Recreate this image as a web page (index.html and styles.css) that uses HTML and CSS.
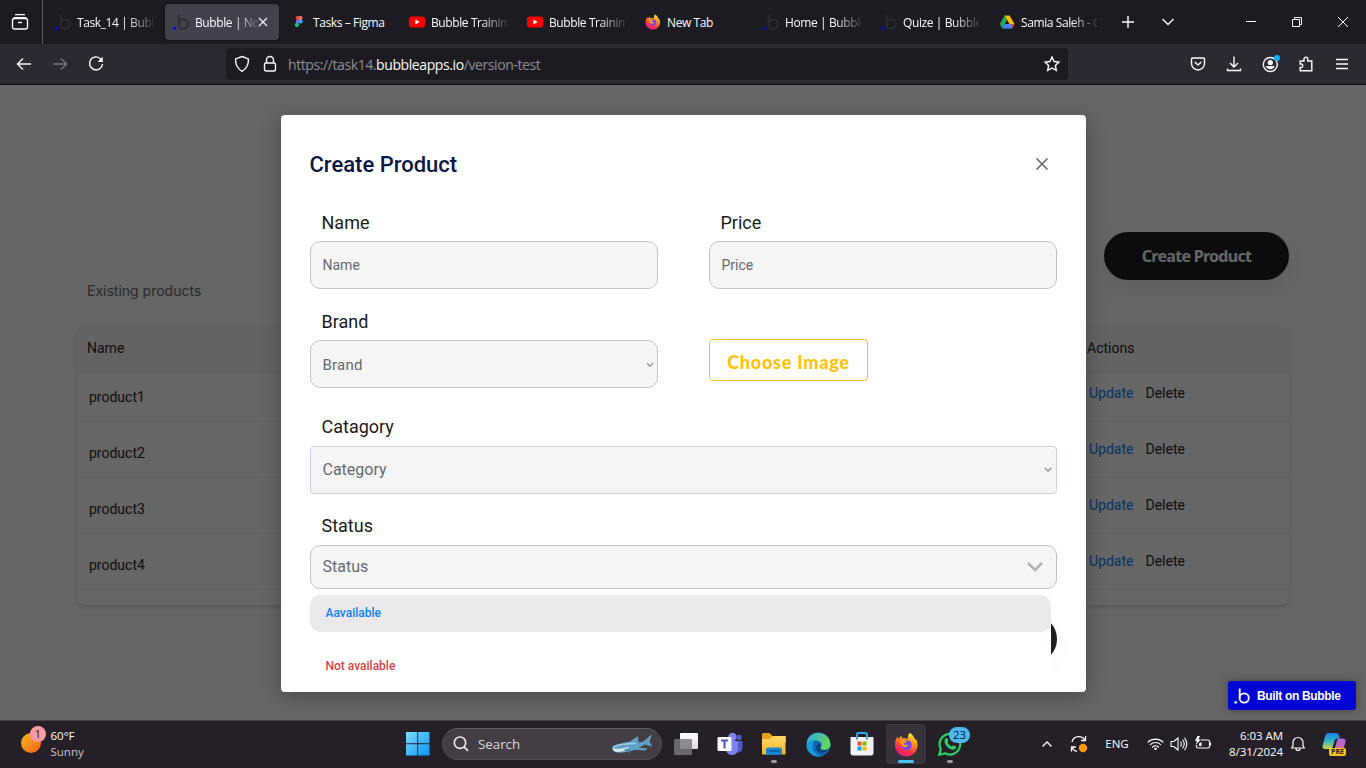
FILE: index.html
```
<!DOCTYPE html>
<html lang="en">
<head>
<meta charset="utf-8">
<title>Bubble | No-code apps</title>
<link rel="stylesheet" href="styles.css">
</head>
<body>
<svg class="defs" width="0" height="0">
  <defs>
    <linearGradient id="fx" x1="0.8" y1="0" x2="0.3" y2="1"><stop offset="0" stop-color="#fff44f"/><stop offset=".35" stop-color="#ff980e"/><stop offset=".7" stop-color="#ff3647"/><stop offset="1" stop-color="#e31587"/></linearGradient>
    <linearGradient id="win" x1="0" y1="0" x2="1" y2="1"><stop offset="0" stop-color="#7fdcff"/><stop offset="1" stop-color="#0a93f5"/></linearGradient>
    <linearGradient id="sun" x1="0" y1="0" x2="1" y2="1"><stop offset="0" stop-color="#f5b52a"/><stop offset="1" stop-color="#f2640c"/></linearGradient>
    <linearGradient id="edge" x1="0" y1="0" x2="1" y2=".3"><stop offset="0" stop-color="#2aa8e8"/><stop offset="1" stop-color="#62d75a"/></linearGradient>
    <linearGradient id="folder" x1="0" y1="0" x2="0" y2="1"><stop offset="0" stop-color="#ffd968"/><stop offset="1" stop-color="#f7b52c"/></linearGradient>
    <linearGradient id="pane" x1="0" y1="0" x2="0" y2="1"><stop offset="0" stop-color="#fff"/><stop offset="1" stop-color="#d8d8d8"/></linearGradient>
    <linearGradient id="cop1" x1="0" y1="0" x2="0" y2="1"><stop offset="0" stop-color="#1b7fe8"/><stop offset=".5" stop-color="#2fb6c8"/><stop offset="1" stop-color="#d8d545"/></linearGradient>
    <linearGradient id="cop2" x1="0" y1="0" x2="0" y2="1"><stop offset="0" stop-color="#a568e8"/><stop offset="1" stop-color="#f0688f"/></linearGradient>
    <symbol id="bubble" viewBox="0 0 16 16"><path d="M5.700 .5V10" fill="none" stroke="currentColor" stroke-width="1.800"/><circle cx="10.200" cy="10" r="4.600" fill="none" stroke="currentColor" stroke-width="1.800"/><circle cx="1.700" cy="14.300" r="1.500" class="bubble-dot"/></symbol>
    <symbol id="firefox" viewBox="0 0 24 24"><path d="M15.2.8c3 2 4.200 4.200 4.700 5.700 1 .3 1.900 1.500 2.300 3.200C24.200 17 18.700 23.500 12 23.500 5.500 23.500.8 18.300.8 12.400c0-3.300 1.200-6.200 2.700-8 .1 1 .3 1.700.7 2.300C5.300 5 6.500 4 7.500 3.600c-.1 1 .1 2 .6 2.600 2.300-.4 4.100-.1 5 .9C13 5 13.500 2.200 15.200.8z" fill="url(#fx)"/><circle cx="12.300" cy="12.600" r="4.800" fill="#7548e8"/><path d="M4.500 9.200C7 7.500 9 8.500 12.600 8.700c-.5 1.600-2.800 1.500-3 2.700.5 1.200 2.300 1 4.200.8-1.300 2.800-5.300 3-6.800.5-.5-1-.9-2.500-2.500-3.500z" fill="#ff9a18"/></symbol>
    <symbol id="youtube" viewBox="0 0 16 16"><rect y="2.500" width="16" height="11" rx="2.800" fill="#f00"/><path d="M6.400 5.600v4.800L10.600 8z" fill="#fff"/></symbol>
  </defs>
</svg>

<div class="window">
  <header class="tabs">
    <div class="firefox-view"><svg width="18" height="18" viewBox="0 0 18 18" class="line"><path d="M4 1.600h10M2.500 4.600h13"/><rect x="1.500" y="5.500" width="15" height="10.500" rx="2"/><path d="M7 9.500h4"/></svg></div>
    <div class="tab"><svg class="fav dark"><use href="#bubble"/></svg><span class="tab-title">Task_14 | Bubble</span></div>
    <div class="tab active"><svg class="fav dark"><use href="#bubble"/></svg><span class="tab-title">Bubble | No-code</span><svg class="tab-close line" width="10" height="10" viewBox="0 0 10 10"><path d="M1 1l8 8M9 1L1 9"/></svg></div>
    <div class="tab"><svg class="fav" viewBox="0 0 16 16"><path d="M7.800 2H6.700a2.100 2.100 0 0 0 0 4.200h1.100z" fill="#f24e1e"/><path d="M7.800 2h1.700a2.100 2.100 0 0 1 0 4.200H7.800z" fill="#ff7262"/><path d="M7.800 5.500H6.700a2 2 0 0 0 0 4h1.100z" fill="#a259ff"/><circle cx="9.600" cy="7.500" r="2" fill="#1abcfe"/><path d="M7.800 9.200H6.700a2 2 0 1 0 1.100 1.800z" fill="#0acf83"/></svg><span class="tab-title short">Tasks – Figma</span></div>
    <div class="tab"><svg class="fav"><use href="#youtube"/></svg><span class="tab-title">Bubble Training</span></div>
    <div class="tab"><svg class="fav"><use href="#youtube"/></svg><span class="tab-title">Bubble Training</span></div>
    <div class="tab"><svg class="fav"><use href="#firefox"/></svg><span class="tab-title short">New Tab</span></div>
    <div class="tab"><svg class="fav dark"><use href="#bubble"/></svg><span class="tab-title">Home | Bubble</span></div>
    <div class="tab"><svg class="fav dark"><use href="#bubble"/></svg><span class="tab-title">Quize | Bubble</span></div>
    <div class="tab"><svg class="fav" viewBox="0 0 16 16"><path d="M5.500 1.500L.8 10l2.400 4.500L8 6z" fill="#2aa850"/><path d="M5.500 1.500h5L15.500 10h-5z" fill="#fbbc04"/><path d="M5.600 10H15.500L13 14.500H3.200z" fill="#4285f4"/><path d="M11.500 10h4L13 14.500z" fill="#ea4335"/></svg><span class="tab-title">Samia Saleh - Google</span></div>
    <svg class="line new-tab" width="12" height="12" viewBox="0 0 12 12"><path d="M6 0v12M0 6h12"/></svg>
    <svg class="line list-tabs" width="12" height="8" viewBox="0 0 12 8"><path d="M.5 1L6 6.500 11.500 1"/></svg>
    <div class="win-buttons">
      <svg class="line thin" width="10" height="10" viewBox="0 0 10 10"><path d="M0 4.500h10"/></svg>
      <svg class="line thin" width="10" height="10" viewBox="0 0 10 10"><path d="M.5 2.500h7v7h-7zM2.500 2.500v-2h7v7h-2"/></svg>
      <svg class="line thin" width="10" height="10" viewBox="0 0 10 10"><path d="M0 0l10 10M10 0L0 10"/></svg>
    </div>
  </header>

  <nav class="toolbar">
    <div class="nav-buttons">
      <svg class="line" width="16" height="16" viewBox="0 0 16 16"><path d="M15 8H1.500M7 2.500L1.500 8 7 13.500"/></svg>
      <svg class="line off" width="16" height="16" viewBox="0 0 16 16"><path d="M1 8h13.500M9 2.500L14.500 8 9 13.500"/></svg>
      <svg class="line" width="16" height="16" viewBox="0 0 16 16"><path d="M13 3.200A6.500 6.500 0 1 0 14.500 8"/><path d="M14.800.8v5.200H9.600z" fill="#fbfbfe" stroke="none"/></svg>
    </div>
    <div class="urlbar">
      <svg class="line" width="16" height="18" viewBox="0 0 16 18"><path d="M8 1.500l6.400 2.400c.3 5-1.400 9.500-6.400 12.400C3 13.400 1.300 8.900 1.600 3.900z"/></svg>
      <svg class="line" width="14" height="18" viewBox="0 0 14 18"><rect x="1.500" y="8" width="11" height="8" rx="1.500"/><path d="M3.500 8V5a3.500 3.500 0 0 1 7 0v3"/></svg>
      <span class="url">https://task14.<b>bubbleapps.io</b>/version-test</span>
      <svg class="line star" width="16" height="16" viewBox="0 0 16 16"><path d="M8 1l2.100 4.500 4.900.6-3.600 3.400.9 4.900L8 12l-4.300 2.400.9-4.900L1 6.100l4.900-.6z"/></svg>
    </div>
    <div class="actions-bar">
      <svg class="line" width="16" height="16" viewBox="0 0 16 16"><path d="M2.500 2h11c.6 0 1 .4 1 1v4.500a6.500 6.500 0 0 1-13 0V3c0-.6.400-1 1-1z"/><path d="M4.800 6L8 9l3.200-3"/></svg>
      <svg class="line" width="16" height="16" viewBox="0 0 16 16"><path d="M8 .5v10.500M4 7l4 4 4-4M1.500 12.500v2h13v-2"/></svg>
      <svg class="line" width="18" height="18" viewBox="0 0 18 18"><circle cx="8.300" cy="9.500" r="7"/><circle cx="8.300" cy="7.500" r="2.600" fill="#fbfbfe" stroke="none"/><path d="M4 11h8.600c-.4 2.200-2 3.200-4.300 3.200S4.400 13.200 4 11z" fill="#fbfbfe" stroke="none"/><circle cx="15" cy="2.900" r="3" fill="#00b3ff" stroke="none"/></svg>
      <svg class="line" width="16" height="16" viewBox="0 0 16 16"><path d="M2.200 5H6V3.200a1.900 1.900 0 0 1 3.800 0V5h4v9.800H2.200v-3.300h1.200a1.800 1.800 0 0 0 0-3.500H2.200z"/></svg>
      <svg class="line" width="16" height="16" viewBox="0 0 16 16"><path d="M2 3.500h12M2 8h12M2 12.500h12"/></svg>
    </div>
  </nav>

  <main class="page">
    <section class="products">
      <div class="top"><button class="create">Create Product</button></div>
      <h2 class="existing">Existing products</h2>
      <div class="table">
        <div class="thead"><span>Name</span><span>Actions</span></div>
        <div class="row"><span class="name">product1</span><span class="acts"><a>Update</a><i>Delete</i></span></div>
        <div class="row"><span class="name">product2</span><span class="acts"><a>Update</a><i>Delete</i></span></div>
        <div class="row"><span class="name">product3</span><span class="acts"><a>Update</a><i>Delete</i></span></div>
        <div class="row"><span class="name">product4</span><span class="acts"><a>Update</a><i>Delete</i></span></div>
      </div>
    </section>

    <div class="overlay">
      <form class="modal">
        <div class="modal-head"><h1>Create Product</h1><svg width="14" height="14" viewBox="0 0 14 14"><path d="M1.500 1.500l11 11M12.500 1.500l-11 11" stroke="#6b6b6b" stroke-width="1.700"/></svg></div>
        <div class="grid">
          <div class="field"><label>Name</label><div class="input">Name</div></div>
          <div class="field"><label>Price</label><div class="input">Price</div></div>
          <div class="field"><label>Brand</label><div class="input brand">Brand<svg class="caret" width="8" height="6" viewBox="0 0 8 6"><path d="M1 1.200l3 3 3-3"/></svg></div></div>
          <div class="upload">Choose Image</div>
        </div>
        <div class="field category"><label>Catagory</label><div class="input">Category<svg class="caret" width="8" height="6" viewBox="0 0 8 6"><path d="M.8 1l3.200 3.200L7.200 1"/></svg></div></div>
        <div class="field status"><label>Status</label><div class="input">Status<svg class="caret big" width="18" height="12" viewBox="0 0 18 12"><path d="M2 2l7 7 7-7"/></svg></div>
          <div class="menu"><div class="option picked">Aavailable</div><div class="option no">Not available</div></div>
        </div>
        <div class="submit"></div>
      </form>
      <div class="badge"><svg width="16" height="16"><use href="#bubble"/></svg>Built on Bubble</div>
    </div>
  </main>

  <footer class="taskbar">
    <div class="weather">
      <svg width="26" height="30" viewBox="0 0 26 30"><circle cx="10" cy="19" r="10" fill="url(#sun)"/><circle cx="17" cy="10" r="8" fill="#ff99a4"/></svg><span class="count">1</span>
      <div><p>60°F</p><p class="dim">Sunny</p></div>
    </div>
    <div class="apps">
      <div class="app"><svg width="24" height="24" viewBox="0 0 24 24" fill="url(#win)"><path d="M0 0h11.300v11.300H0zM12.200 0h11.300v11.300H12.200zM0 12.200h11.300v11.300H0zM12.200 12.200h11.300v11.300H12.200z"/></svg></div>
      <div class="search">
        <svg width="16" height="16" viewBox="0 0 16 16" fill="none" stroke="#e8e6e8" stroke-width="1.700"><circle cx="7" cy="6.700" r="5.700"/><path d="M11 10.800l4 4"/></svg><span>Search</span>
        <svg class="shark" width="42" height="22" viewBox="0 0 42 22"><path d="M1 14.500C4 12 9 10.500 14 9.500L19 8.500 27 3l.5 6c2 .5 4 0 6-1.500L41 1l-2.500 8 3 4.500-8-2c-2 1.500-4 2.500-6 3l9 1-2 2-10-.5C19 18 12 20.500 6 19.500c-3-.5-5-2.500-5-5z" fill="#5e9fc4"/><path d="M1.500 15.500c6 1 11-.5 17-1.500-3 3-8 5.500-13 5-2.300-.3-3.700-1.800-4-3.500z" fill="#cfe6e6"/><path d="M2 14C8 11 16 10.500 25 10.500" fill="none" stroke="#9fd0e2" stroke-width="1.600"/><path d="M13 16l5 4 1-3.500z" fill="#3f83ad"/></svg>
      </div>
      <div class="app"><svg width="26" height="24" viewBox="0 0 26 24"><rect x="7" y="1" width="18" height="16" rx="1" fill="url(#pane)"/><rect x="1" y="7" width="18" height="16" rx="1" fill="#777" opacity=".82"/></svg></div>
      <div class="app"><svg width="26" height="24" viewBox="0 0 26 24"><circle cx="15.500" cy="5" r="4.200" fill="#7b83eb"/><circle cx="22" cy="5.500" r="2.700" fill="#5059c9"/><path d="M16 9h9.500v6.500c0 3-1.700 5-4.500 5s-5-2-5-5z" fill="#5059c9"/><path d="M9 9h12v8c0 3.500-2.200 6-6 6s-6-2.500-6-6z" fill="#7b83eb"/><rect x=".5" y="5" width="14" height="14" rx="1.300" fill="#fff"/><path d="M4 8.500h7M7.500 8.500v8" stroke="#4b53bc" stroke-width="2"/></svg></div>
      <div class="app running"><svg width="26" height="24" viewBox="0 0 26 24"><path d="M1 2.500C1 1.500 1.500 1 2.500 1h6l3 3H25v6H1z" fill="#e5a017"/><path d="M1 7h8l3-3h12.500v18.500H1z" fill="url(#folder)"/><path d="M5 23v-5c0-1.500.800-2.500 2.500-2.500h11c1.700 0 2.500 1 2.500 2.500v5z" fill="#1683d1"/><path d="M8 19h10" stroke="#075a9e" stroke-width="1.500"/></svg></div>
      <div class="app"><svg width="25" height="25" viewBox="0 0 25 25"><circle cx="12.500" cy="12.500" r="12" fill="#1267b8"/><path d="M1 9.500C3.500-2.500 23-2.500 24.500 12c0 4-3 6-6.500 6-3 0-5-1.500-3.200-3.500C17 11 13 8 9 8.500c-4 .5-7 3-8.300 6.500z" fill="url(#edge)"/><path d="M.6 14C1 10 5 7.700 9.500 8c-3.500 3-4 9 0 13.500 2.500 2 5 2.500 7 2.200C8 27 .5 20 .6 14z" fill="#159bdc"/><path d="M15 14.500c-1.800 2 .2 3.600 3 3.600 1.500 0 3-.4 4.200-1.100-3.200 5.800-11.700 4.500-12-.5 0-2.500 1-5 4-5.500 1 1 1.300 2.500.8 3.500z" fill="#0b3f80"/></svg></div>
      <div class="app"><svg width="24" height="24" viewBox="0 0 24 24"><path d="M7 7V2.500C7 1.500 7.500 1 8.500 1h7c1 0 1.500.5 1.500 1.500V7" fill="none" stroke="#31a8e8" stroke-width="2"/><path d="M.5 5h23v16c0 1.500-1 2.500-2.500 2.500H3C1.500 23.500.5 22.500.5 21z" fill="#f1f1f3"/><path d="M7.500 9.500h4v4h-4z" fill="#f25022"/><path d="M12.500 9.500h4v4h-4z" fill="#7fba00"/><path d="M7.500 14.500h4v4h-4z" fill="#00a4ef"/><path d="M12.500 14.500h4v4h-4z" fill="#ffb900"/><path d="M7 5v2.500M17 5v2.500" stroke="#1679bd" stroke-width="1.500"/></svg></div>
      <div class="app current"><svg width="25" height="25"><use href="#firefox"/></svg></div>
      <div class="app running"><svg width="24" height="24" viewBox="0 0 24 24"><path d="M1.200 22.800l1.600-5.700A10.300 10.300 0 1 1 7 21.300z" fill="none" stroke="#25d366" stroke-width="2.200"/><path d="M7.300 6.500c1-1 2-.5 2.400.6l.7 1.700c.2.700-.8 1.300-1 1.800 1 2 2.500 3.200 4.500 4 .6-.3 1-1.500 1.800-1.200l2.200 1.200c.7.500 0 2-1 2.700-3.700 2-10.500-3.500-10.300-8 0-1 .2-2 .7-2.800z" fill="#25d366"/></svg><span class="unread">23</span></div>
    </div>
    <div class="tray">
      <svg width="12" height="8" viewBox="0 0 12 8" class="line"><path d="M1.500 6.500L6 2l4.500 4.500"/></svg>
      <svg width="18" height="18" viewBox="0 0 18 18" class="line"><path d="M2 7A7 7 0 0 1 14.800 5M15.500 1v4.500H11M1.500 16.500V12H6M2 12.500a7 7 0 0 0 5 3.800" stroke-width="1.300"/><circle cx="13" cy="13" r="4.200" fill="#ff990a" stroke="none"/></svg>
      <span>ENG</span>
      <svg width="17" height="14" viewBox="0 0 17 14" class="line" stroke-linecap="round"><path d="M1 5.200a10.500 10.500 0 0 1 15 0M3.300 7.700a7.300 7.300 0 0 1 10.400 0M5.600 10a4 4 0 0 1 5.800 0" stroke-width="1.200"/><circle cx="8.500" cy="11.800" r="1.300" fill="#fff" stroke="none"/></svg>
      <svg width="18" height="16" viewBox="0 0 18 16" class="line"><path d="M1 5.500h2.800L8 2v12l-4.200-3.500H1zM10.500 5.500c1 1.500 1 3.500 0 5M12.500 3.500c2.300 3 2.300 6 0 9M14.500 1.800c3 4 3 8.500 0 12.400" stroke-width="1.100"/></svg>
      <svg width="18" height="16" viewBox="0 0 18 16" class="line"><path d="M7 4h7c1 0 1.500.5 1.500 1.500v5c0 1-.5 1.500-1.500 1.500H4c-1 0-1.500-.5-1.500-1.500V9M16.500 6.500v3" stroke-width="1.200"/><path d="M3.500 0L1 5h2L1.500 9 7 3.500H4.500L6 0z" fill="#fff" stroke="none"/><path d="M5 10V7.500L7.500 6v4z" fill="#fff" stroke="none"/></svg>
      <div class="clock"><p>6:03 AM</p><p>8/31/2024</p></div>
      <svg width="16" height="16" viewBox="0 0 16 16" class="line"><path d="M1.700 12L3 9.500v-3a5 5 0 0 1 10 0v3l1.300 2.500zM6 12.500a2 2 0 0 0 4 0" stroke-width="1.200"/></svg>
      <div class="copilot"><svg width="24" height="23" viewBox="0 0 24 23"><path d="M7 1h7c2 0 2.500 1 3 3l.7 2.500H15c-1.500 0-2.300 1.500-3 4L10 17H3.500C0 17 .2 14.500 1 12L3.300 4c.6-2 1.500-3 3.700-3z" fill="url(#cop1)"/><path d="M16.500 6.500H21c2.500 0 3 1.500 2.300 4l-2 7c-.5 2-1.300 3-3.300 3h-6.500l3-10c.6-2.300.8-4 2-4z" fill="url(#cop2)"/></svg><span>PRE</span></div>
    </div>
  </footer>
</div>
</body>
</html>
```

FILE: styles.css
```
* { box-sizing: border-box; }
body { margin: 0; overflow: hidden; font-family: Roboto, "Liberation Sans", sans-serif; }
p, h1, h2 { margin: 0; }
svg { display: block; flex: none; }
.defs { position: absolute; }
.window { display: grid; grid-template-rows: 44px 41px 635px 48px; width: 1366px; height: 768px; }
.line { fill: none; stroke: #fbfbfe; stroke-width: 1.4; }
.line.thin { stroke-width: 1; }
.line.off { stroke: #77767d; }

/* browser tabs */
.tabs { display: flex; align-items: center; background: #1c1b22; color: #fbfbfe; font: 12px "Open Sans", "Noto Sans", sans-serif; letter-spacing: -.4px; }
.firefox-view { display: grid; place-items: center; width: 43px; height: 44px; padding-right: 3px; border-right: 1px solid #5b5a60; }
.tab { display: flex; align-items: center; flex: none; width: 114px; height: 36px; margin: 0 2px; padding: 0 8px 0 8px; border-radius: 4px; }
.firefox-view + .tab { margin-left: 4px; }
.tab.active { background: #42414d; box-shadow: 0 0 3px rgba(0,0,0,.5); }
.fav { width: 16px; height: 16px; margin-right: 6px; }
.dark { color: #2d2c2f; }
.bubble-dot { fill: var(--dot, #00f); }
.tab-title { flex: 1; overflow: hidden; white-space: nowrap; -webkit-mask-image: linear-gradient(90deg, #000 65%, transparent 105%); mask-image: linear-gradient(90deg, #000 65%, transparent 105%); }
.tab-title.short { -webkit-mask-image: none; mask-image: none; }
.tab-close { margin: 0 3px 0 0; stroke-width: 1.1; }
.new-tab { margin-left: 15px; }
.list-tabs { margin-left: 28px; }
.win-buttons { display: flex; gap: 36px; margin-left: auto; padding-right: 18px; }

/* navigation toolbar */
.toolbar { display: flex; align-items: center; background: #2b2a33; border-bottom: 1px solid #0c0c0d; color: #fbfbfe; }
.nav-buttons { display: flex; gap: 20px; width: 226px; padding-left: 16px; }
.urlbar { display: flex; align-items: center; width: 842px; height: 32px; padding: 0 8px; background: #1c1b22; border-radius: 4px; }
.urlbar svg + svg { margin-left: 13px; }
.url { margin-left: 11px; color: #8f8e94; font: 14px "Open Sans", "Noto Sans", sans-serif; letter-spacing: -.41px; padding-top: 1px; }
.url b { color: #fbfbfe; font-weight: 400; }
.star { margin-left: auto; }
.actions-bar { display: flex; align-items: center; gap: 20px; margin-left: 122px; }
.actions-bar svg:nth-child(3) { margin-right: -2px; }

/* products page */
.page { position: relative; background: #fff; overflow: hidden; }
.products { width: 1212px; margin-left: 77px; padding-top: 147px; }
.top { display: flex; justify-content: flex-end; }
.create { width: 185px; height: 48px; padding: 0; border: 0; border-radius: 24px; background: #1d2122; color: #fff; font: 700 16px "Noto Sans", "Open Sans", sans-serif; letter-spacing: -.7px; box-shadow: 0 8px 20px rgba(90,80,150,.13); }
.existing { height: 24px; padding-left: 10px; color: #6b6b6b; font: 400 14px/22px Inter, sans-serif; }
.table { height: 280px; margin-top: 21px; border-radius: 8px; box-shadow: 0 2px 4px rgba(0,0,0,.16); font-size: 14px; color: #262626; }
.thead { display: flex; height: 48px; padding: 0 10px 2px; align-items: center; background: #f8f8f8; border-bottom: 1px solid #f0f0f0; border-radius: 8px 8px 0 0; }
.thead span:first-child { width: 1000px; }
.row { display: flex; align-items: flex-end; height: 56px; margin-left: 3px; padding-left: 9px; border-bottom: 1px solid #f0f0f0; line-height: 16px; }
.thead + .row { height: 49px; }
.name { width: 1000px; margin-bottom: 16px; }
.acts { display: flex; gap: 12px; margin-bottom: 20px; }
.acts a { color: #0d80ff; }
.acts i { font-style: normal; }

/* create-product dialog */
.overlay { position: absolute; inset: 0; background: rgba(0,0,0,.6); }
.modal { width: 805px; height: 577px; margin: 30px 0 0 281px; padding: 36px 29px 0; background: #fff; border-radius: 4px; box-shadow: 0 4px 20px rgba(0,0,0,.3); }
.modal-head { display: flex; justify-content: space-between; align-items: center; height: 26px; padding-right: 8px; }
.modal-head h1 { margin-left: -.5px; padding-top: 2px; color: #091747; font: 500 22px/26px Roboto, sans-serif; }
.grid { display: grid; grid-template-columns: 348px 348px; gap: 22px 51px; padding-top: 35px; }
.field label { display: block; padding-left: 11.5px; color: #1b1b1b; font-size: 18px; line-height: 22px; }
.input { display: flex; align-items: center; justify-content: space-between; height: 48px; margin-top: 7px; padding: 0 3px 0 11.5px; background: #f5f5f5; border: 1px solid #c2c2c2; border-radius: 10px; color: #666a6e; font-size: 14px; }
.brand { padding-top: 1px; font-size: 15px; letter-spacing: .2px; }
.caret { fill: none; stroke: #8c8c8c; stroke-width: 1.3; }
.caret.big { stroke: #b4b4b4; stroke-width: 2.6; margin: 2px 9px 0 0; }
.upload { display: grid; place-items: center; width: 159px; height: 42px; margin-top: 28px; padding-top: 3px; border: 1px solid #ffc107; border-radius: 4px; color: #ffc107; font: 900 18px Lato, sans-serif; letter-spacing: .75px; white-space: nowrap; }
.category { margin-top: 28px; }
.category .input { margin-top: 8px; padding-right: 4px; padding-bottom: 2px; border-color: #d0d0dc; border-radius: 4px; font-size: 16px; }
.category .caret { margin-top: 2px; }
.status { position: relative; margin-top: 21px; }
.status .input { height: 44px; margin-top: 8px; padding-bottom: 2px; font-size: 16px; }
.menu { position: absolute; top: 80px; left: 0; width: 741px; height: 92px; background: #fff; border-radius: 12px 12px 0 0; font-size: 12px; font-weight: 500; }
.option { height: 37px; padding: 0 15.5px; line-height: 36px; border-radius: 10px; }
.picked { background: #ebe9ea; color: #0d80ff; }
.no { margin-top: 16px; color: #d84343; }
.submit { width: 160px; height: 48px; margin: 26px 0 0 auto; border-radius: 24px; background: #1d2023; box-shadow: 0 8px 20px rgba(90,80,180,.04); }
.badge { --dot: #8fe0ff; position: absolute; right: 10px; bottom: 10px; display: flex; align-items: center; gap: 7px; width: 128px; height: 29px; padding-left: 6px; background: #0205d3; border-radius: 3px; color: #fff; font: 700 12px "Liberation Sans", sans-serif; letter-spacing: -.33px; box-shadow: 0 0 10px rgba(0,0,0,.35); white-space: nowrap; }

/* taskbar */
.taskbar { display: grid; grid-template-columns: 396px 576px 1fr; background: #251f27; border-top: 1px solid #444147; color: #fff; font: 11.5px "Open Sans", "Noto Sans", sans-serif; }
.taskbar p { line-height: 16px; }
.weather { position: relative; display: flex; gap: 3.5px; padding: 3px 0 0 21px; }
.weather .count { position: absolute; left: 34.5px; top: 5px; color: #1b1b1b; line-height: 16px; }
.weather div { padding-top: 4px; }
.dim { color: #c8c5c9; }
.apps { display: flex; align-items: center; padding-bottom: 1px; }
.app { position: relative; display: grid; place-items: center; width: 44px; height: 46px; }
.app.current::before { content: ""; position: absolute; inset: 3px 2px 3px; background: #37313a; border: 1px solid #403a43; border-radius: 4px; }
.app svg { position: relative; }
.app.running::after, .app.current::after { content: ""; position: absolute; bottom: 4px; width: 6px; height: 3px; border-radius: 2px; background: #a09ca2; }
.app.current::after { width: 16px; background: #4cc2ff; }
.unread { position: absolute; left: 21px; top: 6px; width: 21px; height: 16px; border-radius: 8px; background: #4cb8f5; color: #101820; font-size: 11.5px; line-height: 15px; text-align: center; }
.search { display: flex; align-items: center; width: 220px; height: 32px; margin: 0 2px; padding: 0 8px 0 10px; background: #433d44; border: 1px solid #514b52; border-top-color: #645e65; border-radius: 16px; color: #dedbdf; font-size: 13.3px; }
.search span { margin-left: 9px; }
.shark { margin-left: auto; }
.tray { display: grid; grid-template-columns: 32px 32px 48px 24px 24px 24px 68px 30px 42px; justify-content: end; align-items: center; justify-items: center; padding: 0 11px 2px 0; }
.tray > span { font-size: 11.5px; padding-right: 4px; }
.clock { justify-self: end; text-align: right; font-size: 11.5px; letter-spacing: -.05px; }
.copilot { position: relative; }
.copilot span { position: absolute; left: 7px; bottom: -1px; padding: 0 2px; background: #f8c51c; border-radius: 2px; color: #222; font: 700 7px/8px "Open Sans", sans-serif; }
```
